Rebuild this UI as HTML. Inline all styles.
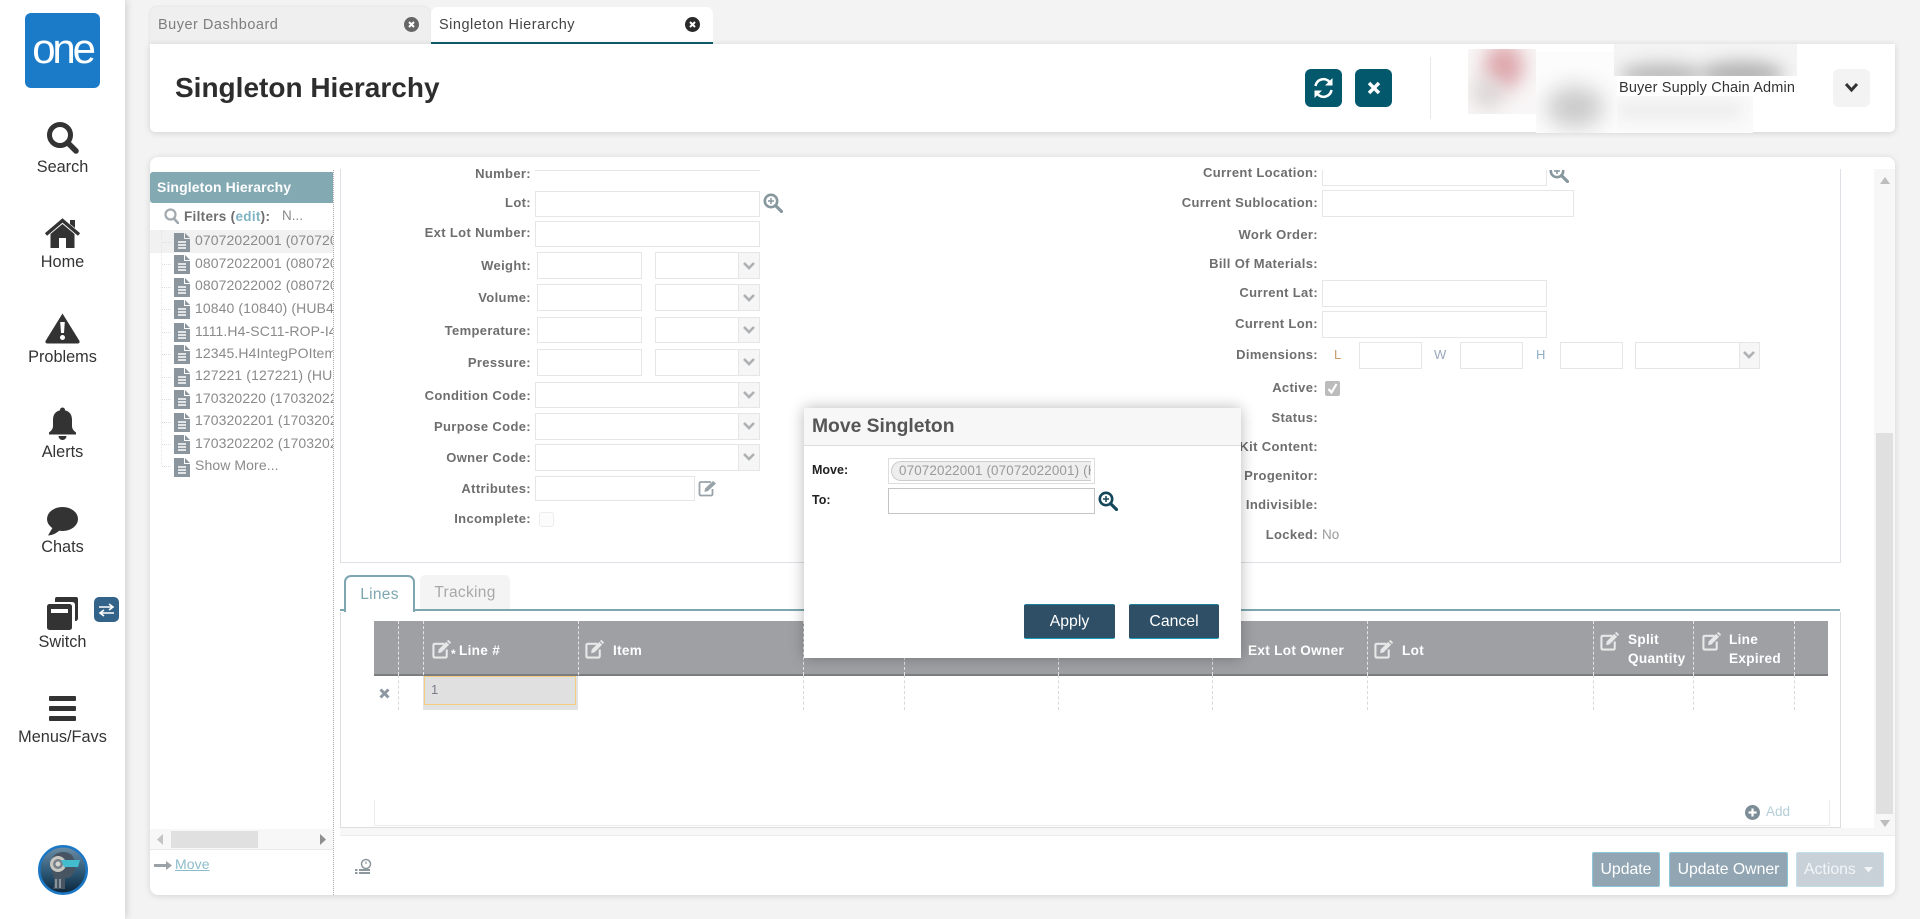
<!DOCTYPE html>
<html><head><meta charset="utf-8"><title>Singleton Hierarchy</title>
<style>
html,body{margin:0;padding:0;width:1920px;height:919px;overflow:hidden;background:#f3f3f3;font-family:"Liberation Sans",Arial,sans-serif;font-size:14px;color:#333}
div,span,svg{position:absolute;box-sizing:border-box}
.t{white-space:nowrap;line-height:18px}
.nav{left:0;width:125px;text-align:center;font-size:16.300px;color:#333;white-space:nowrap;line-height:18px}
.lb{width:191px;left:340px;text-align:right;font-weight:bold;font-size:13px;color:#6e6e6e;white-space:nowrap;line-height:18px;letter-spacing:.35px}
.rb{width:300px;left:1018px;text-align:right;font-weight:bold;font-size:13px;color:#6e6e6e;white-space:nowrap;line-height:18px;letter-spacing:.35px}
.i{background:#fff;border:1px solid #e6e6e6}
.dd{background:#f6f6f6;border:1px solid #e6e6e6}
.ch{width:14px;height:9px}
.tr{left:195px;width:138px;overflow:hidden;white-space:nowrap;color:#8a8a8a;font-size:14px;line-height:18px;letter-spacing:.1px}
.fi{left:174px;width:16px;height:19px}
.hd{left:162px;width:9px;height:0;border-top:1px dotted #dcdcdc}
.dash{width:0;border-left:1px dashed #d8d8d8}
.dh{width:0;border-left:1px dashed #e4e4e4}
.th{color:#fff;font-weight:bold;font-size:13.600px;line-height:18px;white-space:nowrap;letter-spacing:.3px}
.btn{color:#fff;text-align:center;font-size:15.800px;line-height:33px;border-radius:2px}
</style></head><body>
<svg width="0" height="0" style="left:0;top:0"><defs>
<symbol id="file" viewBox="0 0 16 19"><path d="M0 0H10V6H16V19H0Z" fill="#8b959d"/><path d="M11 0L16 5H11Z" fill="#8b959d"/><path d="M4 9H12M4 12H12M4 15H12" stroke="#fff" stroke-width="1.4"/></symbol>
<symbol id="edit" viewBox="0 0 20 20"><path d="M13 4H3Q1.500 4 1.500 5.500V17Q1.500 18.500 3 18.500H14Q15.500 18.500 15.500 17V10" fill="none" stroke="#e8e8e8" stroke-width="2.200"/><path d="M7 10L15 2L18 5L10 13L6.500 14Z" fill="#e8e8e8"/><path d="M16.500 0.500L19.500 3.500" stroke="#e8e8e8" stroke-width="2"/></symbol>
<symbol id="chev" viewBox="0 0 14 9"><path d="M2 2L7 7L12 2" fill="none" stroke="#aeb0b2" stroke-width="2.600"/></symbol>
<symbol id="mag" viewBox="0 0 20 20"><circle cx="8" cy="8" r="6.200" fill="none" stroke="currentColor" stroke-width="2.600"/><path d="M12.500 12.500L18.500 18.500" stroke="currentColor" stroke-width="3.200" stroke-linecap="round"/><path d="M8 5V11M5 8H11" stroke="currentColor" stroke-width="1.500"/></symbol>
</defs></svg>

<!-- sidebar -->
<div style="left:0;top:0;width:125px;height:919px;background:#fff;box-shadow:2px 0 7px rgba(0,0,0,.13)"></div>
<div style="left:25px;top:13px;width:75px;height:75px;background:#1b7bc9;border-radius:6px"></div>
<div class="t" style="left:25px;top:29px;width:75px;text-align:center;color:#fff;font-size:42px;line-height:40px;letter-spacing:-3.200px">one</div>

<svg style="left:46px;top:121px" width="33" height="33" viewBox="0 0 33 33"><circle cx="14" cy="14" r="10.500" fill="none" stroke="#333" stroke-width="5"/><path d="M21.500 21.500L30 30" stroke="#333" stroke-width="5.500" stroke-linecap="round"/></svg>
<div class="nav" style="top:158px">Search</div>
<svg style="left:45px;top:218px" width="35" height="30" viewBox="0 0 35 30"><path d="M17.500 6L5.500 16V30H14V20H21V30H29.500V16Z" fill="#333"/><path d="M1 16.500L17.500 2.500L34 16.500" fill="none" stroke="#333" stroke-width="3.400"/><path d="M25 2H30V10L25 6Z" fill="#333"/></svg>
<div class="nav" style="top:253px">Home</div>
<svg style="left:45px;top:312px" width="35" height="32" viewBox="0 0 35 32"><path d="M17.500 1.500L34.500 29Q35 31.500 32.500 31.500H2.500Q0 31.500 .5 29Z" fill="#333"/><path d="M15.200 10H19.800L19 21H16Z" fill="#fff"/><circle cx="17.500" cy="25.500" r="2.500" fill="#fff"/></svg>
<div class="nav" style="top:348px">Problems</div>
<svg style="left:49px;top:407px" width="27" height="33" viewBox="0 0 27 33"><path d="M13.500 0.500A2.500 2.500 0 0 1 16 3.200C21 4.500 23 8 23 13V19C23 22 25 24 27 25.500V27.500H0V25.500C2 24 4 22 4 19V13C4 8 6 4.500 11 3.200A2.500 2.500 0 0 1 13.500 .5Z" fill="#333"/><path d="M9.500 29H17.500A4 4 0 0 1 9.500 29Z" fill="#333"/></svg>
<div class="nav" style="top:443px">Alerts</div>
<svg style="left:47px;top:507px" width="31" height="29" viewBox="0 0 31 29"><ellipse cx="15.500" cy="12" rx="15.500" ry="12" fill="#333"/><path d="M6 20L1 28.500Q8 28 13 23Z" fill="#333"/></svg>
<div class="nav" style="top:538px">Chats</div>
<svg style="left:47px;top:597px" width="32" height="33" viewBox="0 0 32 33"><path d="M8 2Q8 0 10 0H29Q31 0 31 2V21Q31 24 28 24V8Q28 5 25 5H8Z" fill="#333"/><rect x="0" y="7" width="25" height="26" rx="2.500" fill="#333"/><rect x="4" y="12" width="17" height="4" fill="#fff"/></svg>
<div style="left:94px;top:597px;width:25px;height:25px;background:#34638a;border-radius:5px"></div>
<svg style="left:98px;top:603px" width="17" height="14" viewBox="0 0 17 14"><path d="M1 4H14M11 1L15 4L11 7" fill="none" stroke="#fff" stroke-width="1.600"/><path d="M16 10H3M6 7L2 10L6 13" fill="none" stroke="#fff" stroke-width="1.600"/></svg>
<div class="nav" style="top:633px">Switch</div>
<div style="left:49px;top:696px;width:27px;height:5px;background:#333;border-radius:1px"></div>
<div style="left:49px;top:706px;width:27px;height:5px;background:#333;border-radius:1px"></div>
<div style="left:49px;top:716px;width:27px;height:5px;background:#333;border-radius:1px"></div>
<div class="nav" style="top:728px">Menus/Favs</div>
<svg style="left:38px;top:845px" width="50" height="50" viewBox="0 0 50 50"><defs><linearGradient id="av" x1="0" y1="0" x2="0" y2="1"><stop offset="0" stop-color="#6f8ea6"/><stop offset=".55" stop-color="#2c5876"/><stop offset="1" stop-color="#0c2338"/></linearGradient></defs><circle cx="25" cy="25" r="23.700" fill="url(#av)" stroke="#1c78c4" stroke-width="2.600"/><path d="M13 18Q14 7 26 7Q37 8 37 20V25L34 30Q31 34 27 33L27 44H15Q18 34 14 28Z" fill="#465561"/><circle cx="20" cy="19" r="8" fill="#c9c7c0"/><circle cx="20" cy="19" r="5" fill="#77818a"/><circle cx="20" cy="19" r="2.500" fill="#d6d5cf"/><path d="M23 15H42L40 22H26Z" fill="#43bccd"/><path d="M18 34V43M22 34V43" stroke="#c9d1d6" stroke-width="1"/></svg>

<!-- tabs -->
<div style="left:150px;top:7px;width:280px;height:37px;background:#efefef;border-radius:7px 7px 0 0;box-shadow:0 0 3px rgba(0,0,0,.1)"></div>
<div class="t" style="left:158px;top:16px;color:#7d7d7d;font-size:14.500px;letter-spacing:.5px">Buyer Dashboard</div>
<div style="left:404px;top:17px;width:15px;height:15px;border-radius:50%;background:#666"></div>
<svg style="left:404px;top:17px" width="15" height="15" viewBox="0 0 15 15"><path d="M5 5L10 10M10 5L5 10" stroke="#fff" stroke-width="2"/></svg>
<div style="left:431px;top:7px;width:282px;height:37px;background:#fff;border-radius:7px 7px 0 0;border-bottom:2px solid #0f5d6e"></div>
<div class="t" style="left:439px;top:16px;color:#444;font-size:14.500px;letter-spacing:.5px">Singleton Hierarchy</div>
<div style="left:685px;top:17px;width:15px;height:15px;border-radius:50%;background:#2a2a2a"></div>
<svg style="left:685px;top:17px" width="15" height="15" viewBox="0 0 15 15"><path d="M5 5L10 10M10 5L5 10" stroke="#fff" stroke-width="2"/></svg>

<!-- header card -->
<div style="left:150px;top:44px;width:1745px;height:88px;background:#fff;border-radius:0 0 5px 5px;box-shadow:0 1px 7px rgba(0,0,0,.14)"></div>
<div style="left:150px;top:44px;width:563px;height:1px;background:#fff"></div>
<div class="t" style="left:175px;top:70px;font-size:28px;line-height:36px;font-weight:bold;color:#2d2d2d">Singleton Hierarchy</div>
<div style="left:1305px;top:69px;width:37px;height:38px;background:#04586b;border-radius:6px"></div>
<svg style="left:1313px;top:77px" width="21" height="22" viewBox="0 0 21 22"><path d="M2.500 9A8 8 0 0 1 16.500 5" fill="none" stroke="#fff" stroke-width="2.600"/><path d="M19.500 1V8.500H12Z" fill="#fff"/><path d="M18.500 13A8 8 0 0 1 4.500 17" fill="none" stroke="#fff" stroke-width="2.600"/><path d="M1.500 21V13.500H9Z" fill="#fff"/></svg>
<div style="left:1355px;top:69px;width:37px;height:38px;background:#04586b;border-radius:6px"></div>
<svg style="left:1367px;top:81px" width="14" height="14" viewBox="0 0 14 14"><path d="M2 2L12 12M12 2L2 12" stroke="#fff" stroke-width="3.400"/></svg>
<div style="left:1430px;top:57px;width:1px;height:62px;background:#e9e9e9"></div>
<!-- blurred patches -->
<div style="left:1468px;top:49px;width:68px;height:65px;background:#f8f6f6;overflow:hidden"><div style="left:16px;top:-6px;width:40px;height:46px;background:#dea9ae;border-radius:50%;filter:blur(9px)"></div><div style="left:4px;top:28px;width:32px;height:32px;background:#dcd6d6;border-radius:50%;filter:blur(9px)"></div></div>
<div style="left:1536px;top:52px;width:81px;height:81px;background:#fcfcfc;overflow:hidden"><div style="left:10px;top:34px;width:58px;height:42px;background:#cbcbcb;border-radius:50%;filter:blur(11px)"></div></div>
<div style="left:1617px;top:96px;width:136px;height:37px;background:#fbfbfb;overflow:hidden"><div style="left:0;top:5px;width:125px;height:18px;background:#ececec;filter:blur(8px)"></div></div>
<div style="left:1614px;top:44px;width:183px;height:32px;background:#f4f4f4;overflow:hidden"><div style="left:5px;top:19px;width:85px;height:24px;background:#bcbcbc;border-radius:50%;filter:blur(8px)"></div><div style="left:85px;top:17px;width:85px;height:26px;background:#b4b4b4;border-radius:50%;filter:blur(8px)"></div></div>
<div style="left:1617px;top:76px;width:180px;height:20px;background:#fff"></div>
<div class="t" style="left:1619px;top:79px;font-size:14.500px;color:#333;letter-spacing:.15px">Buyer Supply Chain Admin</div>
<div style="left:1833px;top:69px;width:37px;height:38px;background:#f3f3f3;border-radius:6px"></div>
<svg style="left:1844px;top:82px" width="15" height="11" viewBox="0 0 15 11"><path d="M2 2L7.500 8L13 2" fill="none" stroke="#333" stroke-width="3"/></svg>

<!-- main card -->
<div style="left:150px;top:157px;width:1745px;height:738px;background:#fff;border-radius:8px;box-shadow:0 1px 7px rgba(0,0,0,.13)"></div>

<!-- left tree panel -->
<div style="left:150px;top:172px;width:183px;height:31px;background:#83a9b3;border-radius:3px 0 0 3px"></div>
<div class="t" style="left:157px;top:178px;color:#fff;font-weight:bold;font-size:14px;letter-spacing:.1px">Singleton Hierarchy</div>
<div style="left:333px;top:170px;width:0;height:725px;border-left:1px dotted #aaa"></div>
<svg style="left:164px;top:208px;color:#9aa3a8" width="15" height="16" viewBox="0 0 15 16"><circle cx="6.500" cy="6.500" r="5" fill="none" stroke="#a3aaaf" stroke-width="2.200"/><path d="M10 10.500L14 15" stroke="#a3aaaf" stroke-width="2.600" stroke-linecap="round"/></svg>
<div class="t" style="left:184px;top:208px;font-weight:bold;font-size:13.500px;color:#6e6e6e;letter-spacing:.3px">Filters (<span style="position:static;color:#7fb3c3">edit</span>):</div>
<div class="t" style="left:282px;top:207px;font-size:13.500px;color:#8a8a8a">N...</div>
<div style="left:150px;top:230px;width:183px;height:23px;background:#f1f1f1"></div>
<div style="left:161px;top:230px;width:0;height:236px;border-left:1px dotted #e6e6e6"></div>
<div class="hd" style="top:242px"></div><div class="hd" style="top:264px"></div><div class="hd" style="top:287px"></div><div class="hd" style="top:309px"></div><div class="hd" style="top:332px"></div><div class="hd" style="top:354px"></div><div class="hd" style="top:377px"></div><div class="hd" style="top:399px"></div><div class="hd" style="top:422px"></div><div class="hd" style="top:444px"></div><div class="hd" style="top:466px"></div>

<svg class="fi" style="top:233px"><use href="#file"/></svg><div class="tr" style="top:231px">07072022001 (07072022001)</div>
<svg class="fi" style="top:255px"><use href="#file"/></svg><div class="tr" style="top:254px">08072022001 (08072022001)</div>
<svg class="fi" style="top:278px"><use href="#file"/></svg><div class="tr" style="top:276px">08072022002 (08072022002)</div>
<svg class="fi" style="top:300px"><use href="#file"/></svg><div class="tr" style="top:299px">10840 (10840) (HUB4)</div>
<svg class="fi" style="top:323px"><use href="#file"/></svg><div class="tr" style="top:322px">1111.H4-SC11-ROP-I4</div>
<svg class="fi" style="top:345px"><use href="#file"/></svg><div class="tr" style="top:344px">12345.H4IntegPOItem</div>
<svg class="fi" style="top:368px"><use href="#file"/></svg><div class="tr" style="top:366px">127221 (127221) (HUB4)</div>
<svg class="fi" style="top:390px"><use href="#file"/></svg><div class="tr" style="top:389px">170320220 (170320220)</div>
<svg class="fi" style="top:413px"><use href="#file"/></svg><div class="tr" style="top:411px">1703202201 (1703202201)</div>
<svg class="fi" style="top:435px"><use href="#file"/></svg><div class="tr" style="top:434px">1703202202 (1703202202)</div>
<svg class="fi" style="top:458px"><use href="#file"/></svg><div class="tr" style="top:456px">Show More...</div>

<div style="left:150px;top:829px;width:183px;height:21px;background:#f7f7f7;border-bottom:1px solid #e9e9e9"></div>
<div style="left:171px;top:831px;width:87px;height:17px;background:#e0e0e0"></div>
<svg style="left:157px;top:834px" width="7" height="11"><path d="M6 0V11L0 5.500Z" fill="#c4c4c4"/></svg>
<svg style="left:319px;top:834px" width="7" height="11"><path d="M1 0V11L7 5.500Z" fill="#8f8f8f"/></svg>
<svg style="left:154px;top:860px" width="18" height="11" viewBox="0 0 18 11"><path d="M0 4H12V1L18 5.500L12 10V7H0Z" fill="#9aa2a8"/></svg>
<div class="t" style="left:175px;top:855px;font-size:14px;color:#8cbccb;text-decoration:underline;letter-spacing:.1px">Move</div>

<!-- form frame -->
<div style="left:340px;top:169px;width:1501px;height:394px;border:1px solid #dfdfe6;border-top:0"></div>

<!-- left form -->
<div class="lb" style="top:165px">Number:</div>
<div style="left:535px;top:170px;width:225px;height:1px;background:#e6e6e6"></div>
<div class="lb" style="top:194px">Lot:</div><div class="i" style="left:535px;top:191px;width:225px;height:26px"></div>
<svg style="left:763px;top:193px;color:#87979e" width="20" height="20"><use href="#mag"/></svg>
<div class="lb" style="top:224px">Ext Lot Number:</div><div class="i" style="left:535px;top:221px;width:225px;height:26px"></div>
<div class="lb" style="top:257px">Weight:</div><div class="i" style="left:537px;top:252px;width:105px;height:27px"></div><div class="i" style="left:655px;top:252px;width:85px;height:27px"></div><div class="dd" style="left:738px;top:252px;width:22px;height:27px"></div><svg class="ch" style="left:742px;top:261px"><use href="#chev"/></svg>
<div class="lb" style="top:289px">Volume:</div><div class="i" style="left:537px;top:284px;width:105px;height:27px"></div><div class="i" style="left:655px;top:284px;width:85px;height:27px"></div><div class="dd" style="left:738px;top:284px;width:22px;height:27px"></div><svg class="ch" style="left:742px;top:293px"><use href="#chev"/></svg>
<div class="lb" style="top:322px">Temperature:</div><div class="i" style="left:537px;top:317px;width:105px;height:26px"></div><div class="i" style="left:655px;top:317px;width:85px;height:26px"></div><div class="dd" style="left:738px;top:317px;width:22px;height:26px"></div><svg class="ch" style="left:742px;top:325px"><use href="#chev"/></svg>
<div class="lb" style="top:354px">Pressure:</div><div class="i" style="left:537px;top:349px;width:105px;height:27px"></div><div class="i" style="left:655px;top:349px;width:85px;height:27px"></div><div class="dd" style="left:738px;top:349px;width:22px;height:27px"></div><svg class="ch" style="left:742px;top:357px"><use href="#chev"/></svg>
<div class="lb" style="top:387px">Condition Code:</div><div class="i" style="left:535px;top:382px;width:205px;height:26px"></div><div class="dd" style="left:738px;top:382px;width:22px;height:26px"></div><svg class="ch" style="left:742px;top:390px"><use href="#chev"/></svg>
<div class="lb" style="top:418px">Purpose Code:</div><div class="i" style="left:535px;top:413px;width:205px;height:27px"></div><div class="dd" style="left:738px;top:413px;width:22px;height:27px"></div><svg class="ch" style="left:742px;top:421px"><use href="#chev"/></svg>
<div class="lb" style="top:449px">Owner Code:</div><div class="i" style="left:535px;top:444px;width:205px;height:27px"></div><div class="dd" style="left:738px;top:444px;width:22px;height:27px"></div><svg class="ch" style="left:742px;top:452px"><use href="#chev"/></svg>
<div class="lb" style="top:480px">Attributes:</div><div class="i" style="left:535px;top:476px;width:160px;height:25px"></div>
<svg style="left:698px;top:479px" width="20" height="18" viewBox="0 0 20 18"><path d="M13 3H3Q1.500 3 1.500 4.500V15Q1.500 16.500 3 16.500H13Q14.500 16.500 14.500 15V10" fill="none" stroke="#98a4aa" stroke-width="1.800"/><path d="M7 9.500L15 2L18 4.500L10 12L6.500 13Z" fill="#98a4aa"/></svg>
<div class="lb" style="top:510px">Incomplete:</div><div style="left:539px;top:512px;width:15px;height:15px;border:1px solid #ececec;border-radius:3px;background:#fcfcfc"></div>

<!-- right form -->
<div class="rb" style="top:164px">Current Location:</div>
<div style="left:1322px;top:170px;width:225px;height:16px;border:1px solid #e6e6e6;border-top:0"></div>
<div style="left:1549px;top:170px;width:20px;height:13px;overflow:hidden"><svg style="left:0;top:-7px;color:#87979e" width="20" height="20"><use href="#mag"/></svg></div>
<div class="rb" style="top:194px">Current Sublocation:</div><div class="i" style="left:1322px;top:190px;width:252px;height:27px"></div>
<div class="rb" style="top:226px">Work Order:</div>
<div class="rb" style="top:255px">Bill Of Materials:</div>
<div class="rb" style="top:284px">Current Lat:</div><div class="i" style="left:1322px;top:280px;width:225px;height:27px"></div>
<div class="rb" style="top:315px">Current Lon:</div><div class="i" style="left:1322px;top:311px;width:225px;height:27px"></div>
<div class="rb" style="top:346px">Dimensions:</div>
<div class="t" style="left:1334px;top:346px;color:#c89a6a;font-size:13px">L</div><div class="i" style="left:1359px;top:342px;width:63px;height:27px"></div>
<div class="t" style="left:1434px;top:346px;color:#9aa6bd;font-size:13px">W</div><div class="i" style="left:1460px;top:342px;width:63px;height:27px"></div>
<div class="t" style="left:1536px;top:346px;color:#8fb1c8;font-size:13px">H</div><div class="i" style="left:1560px;top:342px;width:63px;height:27px"></div>
<div class="i" style="left:1635px;top:342px;width:105px;height:27px"></div><div class="dd" style="left:1739px;top:342px;width:21px;height:27px"></div><svg class="ch" style="left:1742px;top:350px"><use href="#chev"/></svg>
<div class="rb" style="top:379px">Active:</div>
<div style="left:1325px;top:381px;width:15px;height:15px;background:#bcbcbc;border-radius:2px"></div>
<svg style="left:1327px;top:383px" width="11" height="11" viewBox="0 0 11 11"><path d="M1.500 6L4.500 9.500L9.500 1" fill="none" stroke="#fff" stroke-width="2.200"/></svg>
<div class="rb" style="top:409px">Status:</div>
<div class="rb" style="top:438px">Kit Content:</div>
<div class="rb" style="top:467px">Progenitor:</div>
<div class="rb" style="top:496px">Indivisible:</div>
<div class="rb" style="top:526px">Locked:</div>
<div class="t" style="left:1322px;top:526px;color:#999;font-size:13.500px">No</div>

<!-- vertical scrollbar -->
<div style="left:1874px;top:169px;width:21px;height:666px;background:#f7f7f7"></div>
<div style="left:1876px;top:433px;width:17px;height:381px;background:#e0e0e0"></div>
<svg style="left:1880px;top:177px" width="10" height="7"><path d="M5 0L10 7H0Z" fill="#bdbdbd"/></svg>
<svg style="left:1880px;top:820px" width="10" height="7"><path d="M5 7L10 0H0Z" fill="#bdbdbd"/></svg>

<!-- tabs lines/tracking -->
<div style="left:340px;top:609px;width:1500px;height:2px;background:#7ea6b0"></div>
<div style="left:344px;top:575px;width:71px;height:37px;background:#fff;border:2px solid #7ea6b0;border-bottom:0;border-radius:7px 7px 0 0"></div>
<div class="t" style="left:344px;top:586px;width:71px;text-align:center;color:#7ea6b0;font-size:15.500px;letter-spacing:.3px">Lines</div>
<div style="left:420px;top:575px;width:90px;height:34px;background:#f4f4f4;border-radius:5px 5px 0 0"></div>
<div class="t" style="left:420px;top:584px;width:90px;text-align:center;color:#a8a8a8;font-size:15.500px;letter-spacing:.3px">Tracking</div>

<!-- grid -->
<div style="left:340px;top:612px;width:1501px;height:216px;border:1px solid #dedede;border-top:0"></div>
<div style="left:374px;top:800px;width:1456px;height:26px;border:1px solid #ececec;border-top:0"></div>
<div style="left:374px;top:621px;width:1454px;height:55px;background:#9ea0a4;border-bottom:2px solid #7b7d80"></div>
<div class="dh" style="left:398px;top:621px;height:54px"></div><div class="dash" style="left:398px;top:675px;height:35px"></div>
<div style="left:423px;top:676px;width:155px;height:34px;background:#e2e2e2"></div>
<div style="left:424px;top:676px;width:152px;height:29px;background:#e0e0e0;border:1px solid #f4cd80"></div>
<div class="t" style="left:431px;top:681px;color:#7c7c8a;font-size:13px">1</div>
<div class="dh" style="left:423px;top:621px;height:54px"></div>
<div class="dh" style="left:578px;top:621px;height:54px"></div>
<div class="dh" style="left:803px;top:621px;height:54px"></div><div class="dash" style="left:803px;top:675px;height:35px"></div>
<div class="dh" style="left:904px;top:621px;height:54px"></div><div class="dash" style="left:904px;top:675px;height:35px"></div>
<div class="dh" style="left:1058px;top:621px;height:54px"></div><div class="dash" style="left:1058px;top:675px;height:35px"></div>
<div class="dh" style="left:1212px;top:621px;height:54px"></div><div class="dash" style="left:1212px;top:675px;height:35px"></div>
<div class="dh" style="left:1367px;top:621px;height:54px"></div><div class="dash" style="left:1367px;top:675px;height:35px"></div>
<div class="dh" style="left:1593px;top:621px;height:54px"></div><div class="dash" style="left:1593px;top:675px;height:35px"></div>
<div class="dh" style="left:1693px;top:621px;height:54px"></div><div class="dash" style="left:1693px;top:675px;height:35px"></div>
<div class="dh" style="left:1794px;top:621px;height:54px"></div><div class="dash" style="left:1794px;top:675px;height:35px"></div>
<svg style="left:379px;top:688px" width="11" height="11" viewBox="0 0 11 11"><path d="M1.500 1.500L9.500 9.500M9.500 1.500L1.500 9.500" stroke="#8e98a2" stroke-width="3"/></svg>
<svg style="left:432px;top:640px" width="19" height="19"><use href="#edit"/></svg>
<div class="th" style="left:451px;top:645px;font-size:12px">*</div>
<div class="th" style="left:459px;top:642px">Line #</div>
<svg style="left:585px;top:640px" width="19" height="19"><use href="#edit"/></svg>
<div class="th" style="left:613px;top:642px">Item</div>
<div class="th" style="left:1248px;top:642px">Ext Lot Owner</div>
<svg style="left:1374px;top:640px" width="19" height="19"><use href="#edit"/></svg>
<div class="th" style="left:1402px;top:642px">Lot</div>
<svg style="left:1600px;top:632px" width="19" height="19"><use href="#edit"/></svg>
<div class="th" style="left:1628px;top:631px">Split</div><div class="th" style="left:1628px;top:650px">Quantity</div>
<svg style="left:1702px;top:632px" width="19" height="19"><use href="#edit"/></svg>
<div class="th" style="left:1729px;top:631px">Line</div><div class="th" style="left:1729px;top:650px">Expired</div>

<div style="left:1745px;top:805px;width:15px;height:15px;border-radius:50%;background:#7d8d97"></div>
<svg style="left:1745px;top:805px" width="15" height="15" viewBox="0 0 15 15"><path d="M7.500 3.500V11.500M3.500 7.500H11.500" stroke="#fff" stroke-width="2.200"/></svg>
<div class="t" style="left:1766px;top:803px;color:#b4cdd6;font-size:13.500px">Add</div>

<!-- footer -->
<div style="left:340px;top:828px;width:1555px;height:8px;background:#f7f7f7;border-bottom:1px solid #ececec"></div>
<svg style="left:355px;top:858px" width="17" height="18" viewBox="0 0 17 18"><circle cx="11" cy="6" r="4.500" fill="none" stroke="#8c979e" stroke-width="1.500"/><path d="M11 3.500V6" stroke="#8c979e" stroke-width="1.200"/><path d="M4 12H15M0 12H2.500M4 15H15M0 15H2.500" stroke="#8c979e" stroke-width="2"/></svg>
<div class="btn" style="left:1592px;top:852px;width:68px;height:35px;background:#92a5b3;border:1px solid #8cc6d8">Update</div>
<div class="btn" style="left:1669px;top:852px;width:119px;height:35px;background:#92a5b3;border:1px solid #8cc6d8">Update Owner</div>
<div class="btn" style="left:1796px;top:852px;width:88px;height:35px;background:#c8d1d8;border:1px solid #bfe0ea;color:#f2f5f7;text-align:left;padding-left:7px">Actions</div>
<svg style="left:1864px;top:867px" width="9" height="6"><path d="M0 0H9L4.500 5.500Z" fill="#f2f5f7"/></svg>

<!-- dialog -->
<div style="left:804px;top:408px;width:437px;height:250px;background:#fff;box-shadow:0 0 14px rgba(0,0,0,.28)"></div>
<div style="left:804px;top:408px;width:437px;height:38px;background:#f7f7f7;border-bottom:1px solid #ddd"></div>
<div class="t" style="left:812px;top:416px;font-size:19.300px;line-height:22px;font-weight:bold;color:#555">Move Singleton</div>
<div class="t" style="left:812px;top:461px;font-weight:bold;font-size:12.500px;color:#222">Move:</div>
<div style="left:888px;top:458px;width:207px;height:26px;border:1px solid #ddd;background:#fff"></div>
<div style="left:891px;top:461px;width:200px;height:20px;background:#eee;border:1px solid #ccc;border-right:0;border-radius:10px 0 0 10px;overflow:hidden"></div>
<div class="t" style="left:899px;top:462px;width:192px;overflow:hidden;font-size:13.400px;color:#9a9a9a;letter-spacing:.15px">07072022001 (07072022001) (HUB4)</div>
<div class="t" style="left:812px;top:491px;font-weight:bold;font-size:12.500px;color:#222">To:</div>
<div style="left:888px;top:488px;width:207px;height:26px;border:1px solid #c4c4c4;background:#fff"></div>
<svg style="left:1098px;top:491px;color:#13465a" width="20" height="20"><use href="#mag"/></svg>
<div class="btn" style="left:1024px;top:604px;width:91px;height:35px;background:#2f4f66;border-bottom:1px solid #1c9fbd;border-top:1px solid #1c7f9a">Apply</div>
<div class="btn" style="left:1129px;top:604px;width:90px;height:35px;background:#2f4f66;border-bottom:1px solid #1c9fbd;border-top:1px solid #1c7f9a">Cancel</div>
</body></html>
